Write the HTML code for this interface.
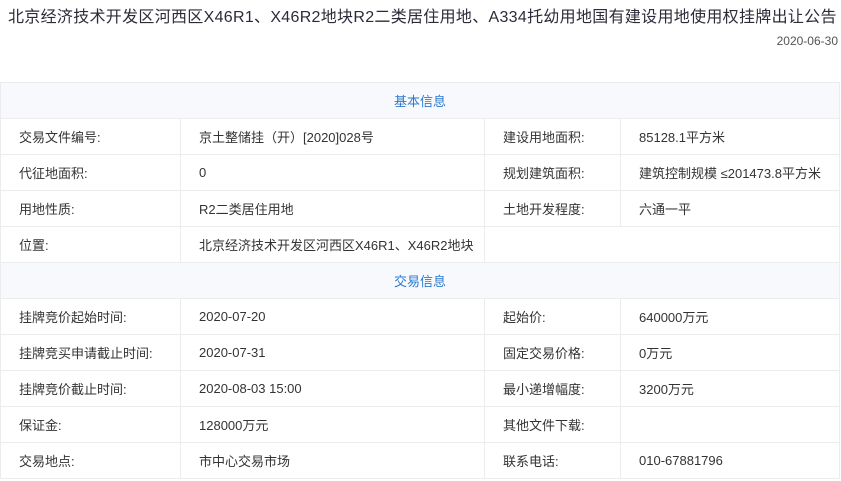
<!DOCTYPE html>
<html><head><meta charset="utf-8"><style>
body{margin:0;background:#fff;font-family:"Liberation Sans","Noto Sans CJK SC",sans-serif;color:#333;width:841px;height:481px;overflow:hidden}
.t{position:absolute;left:8px;top:3px;font-size:16px;color:#2b2b3a;white-space:nowrap;letter-spacing:0.3px}
.d{position:absolute;right:3px;top:34px;font-size:12px;color:#555}
table{position:absolute;left:0;top:82px;border-collapse:collapse;width:839px;font-size:13px;table-layout:fixed}
td{border:1px solid #ececec;height:35px;padding:0 0 0 18px;color:#333;white-space:nowrap}
td.h{background:#f8f9fd;color:#2a7ad0;text-align:center;padding:0}
</style></head><body>
<div class="t">北京经济技术开发区河西区X46R1、X46R2地块R2二类居住用地、A334托幼用地国有建设用地使用权挂牌出让公告</div>
<div class="d">2020-06-30</div>
<table>
<colgroup><col style="width:180px"><col style="width:304px"><col style="width:136px"><col style="width:219px"></colgroup>
<tr><td class="h" colspan="4">基本信息</td></tr>
<tr><td>交易文件编号:</td><td>京土整储挂（开）[2020]028号</td><td>建设用地面积:</td><td>85128.1平方米</td></tr>
<tr><td>代征地面积:</td><td>0</td><td>规划建筑面积:</td><td>建筑控制规模 ≤201473.8平方米</td></tr>
<tr><td>用地性质:</td><td>R2二类居住用地</td><td>土地开发程度:</td><td>六通一平</td></tr>
<tr><td>位置:</td><td>北京经济技术开发区河西区X46R1、X46R2地块</td><td colspan="2"></td></tr>
<tr><td class="h" colspan="4">交易信息</td></tr>
<tr><td>挂牌竞价起始时间:</td><td>2020-07-20</td><td>起始价:</td><td>640000万元</td></tr>
<tr><td>挂牌竞买申请截止时间:</td><td>2020-07-31</td><td>固定交易价格:</td><td>0万元</td></tr>
<tr><td>挂牌竞价截止时间:</td><td>2020-08-03 15:00</td><td>最小递增幅度:</td><td>3200万元</td></tr>
<tr><td>保证金:</td><td>128000万元</td><td>其他文件下载:</td><td></td></tr>
<tr><td>交易地点:</td><td>市中心交易市场</td><td>联系电话:</td><td>010-67881796</td></tr>
</table>
</body></html>
